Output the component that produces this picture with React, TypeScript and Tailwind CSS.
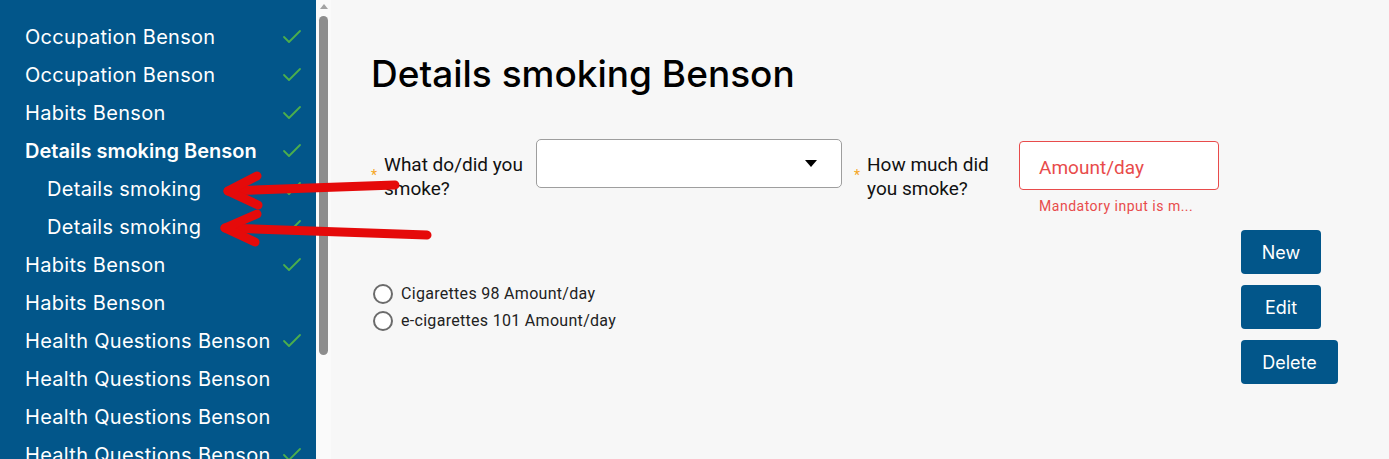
import { Check } from "lucide-react";

type NavItem = { label: string; done?: boolean; active?: boolean; sub?: boolean };

const NAV: NavItem[] = [
  { label: "Occupation Benson", done: true },
  { label: "Occupation Benson", done: true },
  { label: "Habits Benson", done: true },
  { label: "Details smoking Benson", done: true, active: true },
  { label: "Details smoking", done: true, sub: true },
  { label: "Details smoking", done: true, sub: true },
  { label: "Habits Benson", done: true },
  { label: "Habits Benson" },
  { label: "Health Questions Benson", done: true },
  { label: "Health Questions Benson" },
  { label: "Health Questions Benson" },
  { label: "Health Questions Benson", done: true },
];

const HEAD = { fontFamily: "Inter, 'Noto Sans', sans-serif" };
const BODY = { fontFamily: "Roboto, 'Liberation Sans', sans-serif" };

function Sidebar() {
  return (
    <aside className="flex h-[459px] w-[331px] shrink-0 overflow-hidden">
      <nav className="w-[316px] bg-[#02568a] pt-[18px]" style={HEAD}>
        {NAV.map((n, i) => (
          <div key={i} className="flex h-[38px] items-center justify-between pr-[12px]">
            <span
              className={`whitespace-nowrap text-[20px] tracking-[0.3px] text-white ${
                n.sub ? "pl-[47px]" : "pl-[25px]"
              } ${n.active ? "font-semibold tracking-[0px]" : "font-normal"}`}
            >
              {n.label}
            </span>
            {n.done && <Check className="h-[24px] w-[24px] shrink-0 text-[#4cae4c]" strokeWidth={1.8} />}
          </div>
        ))}
      </nav>
      <div className="flex w-[15px] flex-col items-center bg-[#fafafa]">
        <div className="mt-[4px] h-0 w-0 border-x-[4px] border-b-[5px] border-x-transparent border-b-[#a3a3a3]" />
        <div className="mt-[7px] h-[339px] w-[9px] rounded-full bg-[#8d8d8d]" />
      </div>
    </aside>
  );
}

function Req() {
  return <span className="mr-[7px] mt-[29px] text-[14px] leading-none text-[#f5a623]">*</span>;
}

function Main() {
  return (
    <main className="relative flex-1 bg-[#f7f7f7] pl-[40px] pt-[50px]">
      <h1 className="text-[37px] font-medium leading-[48px] text-black" style={HEAD}>
        Details smoking Benson
      </h1>

      <div className="mt-[41px] flex items-start" style={BODY}>
        <Req />
        <label className="w-[152px] pt-[14px] text-[19px] leading-[24px] text-[#111]">
          What do/did you smoke?
        </label>
        <div className="flex h-[49px] w-[306px] shrink-0 items-center justify-end rounded-[5px] border border-[#9e9e9e] bg-white pr-[24px]">
          <div className="h-0 w-0 border-x-[6px] border-t-[7px] border-x-transparent border-t-black" />
        </div>
        <span className="w-[12px]" />
        <Req />
        <label className="w-[152px] pt-[14px] text-[19px] leading-[24px] text-[#111]">
          How much did you smoke?
        </label>
        <div className="mt-[2px] flex flex-col">
          <div className="flex h-[49px] w-[200px] items-center rounded-[4px] border border-[#e84b4b] bg-white pl-[19px] pt-[5px] text-[19px] text-[#e84b4b]">
            Amount/day
          </div>
          <span className="mt-[6px] pl-[20px] text-[14px] tracking-[0.5px] text-[#e84b4b]">
            Mandatory input is m...
          </span>
        </div>
      </div>

      <div className="flex items-start justify-between pr-[51px]">
        <div
          className="ml-[2px] mt-[66px] flex flex-col gap-[5px] text-[16px] tracking-[0.3px] text-[#222]"
          style={BODY}
        >
          {["Cigarettes 98 Amount/day", "e-cigarettes 101 Amount/day"].map((r) => (
            <label key={r} className="flex h-[22px] items-center gap-[8px]">
              <span className="h-[20px] w-[20px] rounded-full border-2 border-[#6b6b6b] bg-white" />
              {r}
            </label>
          ))}
        </div>
        <div className="mt-[13px] flex flex-col gap-[11px] text-[18px] text-white" style={HEAD}>
          {["New", "Edit", "Delete"].map((b) => (
            <button
              key={b}
              className={`h-[44px] rounded-[4px] bg-[#02568a] ${b === "Delete" ? "w-[97px]" : "w-[80px]"}`}
            >
              {b}
            </button>
          ))}
        </div>
      </div>
    </main>
  );
}

function Arrows() {
  return (
    <svg className="pointer-events-none absolute left-0 top-0" width="1389" height="459">
      <g stroke="#e50a0a" strokeWidth="9" strokeLinecap="round" strokeLinejoin="round" fill="none">
        <path d="M395 185 L228 191" />
        <path d="M257 176 L228 191 L258 205" />
        <path d="M427 235 L225 228" />
        <path d="M257 214 L225 228 L255 242" />
      </g>
    </svg>
  );
}

export default function App() {
  return (
    <div className="relative flex h-[459px] w-[1389px] overflow-hidden">
      <Sidebar />
      <Main />
      <Arrows />
    </div>
  );
}
